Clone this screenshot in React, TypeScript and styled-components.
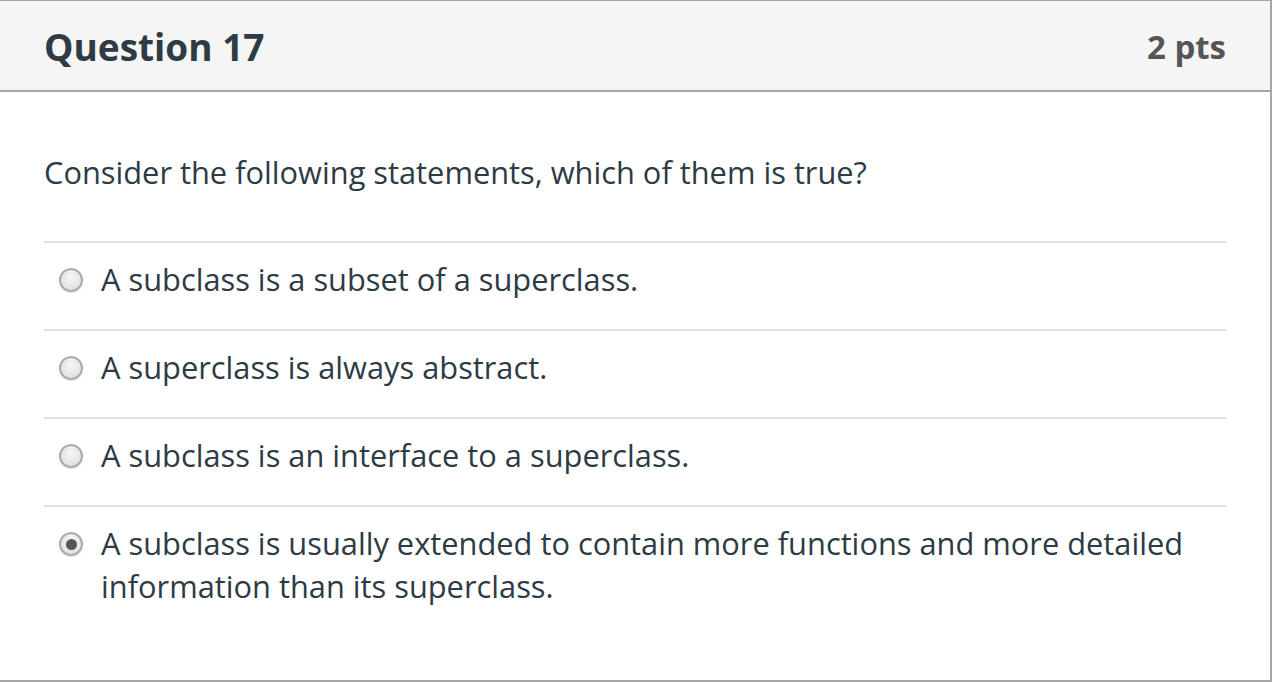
import React from "react";
import styled, { createGlobalStyle } from "styled-components";

const Global = createGlobalStyle`
  html, body { margin: 0; padding: 0; background: #fff; }
  body { font-family: "Open Sans", "Liberation Sans", sans-serif; color: #2d3b45; }
`;

const Panel = styled.div`
  box-sizing: border-box;
  width: 1274px;
  height: 683px;
  margin: -1px 0 0 -2px;
  border: 2px solid #a6a6a6;
  display: flex;
  flex-direction: column;
`;

const Header = styled.div`
  box-sizing: border-box;
  height: 91px;
  background: #f5f5f5;
  border-bottom: 2px solid #a6a6a6;
  display: flex;
  align-items: center;
  justify-content: space-between;
  padding: 1px 44px 0 44px;
`;

const Title = styled.h2`
  margin: 0;
  font-size: 37px;
  font-weight: 700;
  color: #2d3b45;
`;

const Points = styled.div`
  font-size: 33px;
  font-weight: 700;
  color: #555;
`;

const Body = styled.div`
  padding: 58px 44px 0 44px;
`;

const Prompt = styled.p`
  margin: 0 0 47px 0;
  font-size: 30.8px;
  line-height: 44px;
  color: #2d3b45;
`;

const Answers = styled.div`
  display: flex;
  flex-direction: column;
`;

const Answer = styled.label`
  display: flex;
  align-items: flex-start;
  gap: 18px;
  border-top: 2px solid #e0e0e0;
  padding: 15px 0 0 15px;
  min-height: 71px;
  font-size: 30.8px;
  line-height: 43px;
  color: #2d3b45;
`;

const Radio = styled.span<{ $checked?: boolean }>`
  flex: none;
  box-sizing: border-box;
  width: 24px;
  height: 24px;
  margin-top: 10px;
  border-radius: 50%;
  border: 2px solid #ababab;
  background: radial-gradient(circle at 50% 35%, #f6f6f6, #dcdcdc);
  box-shadow: 0 1px 1px rgba(0,0,0,0.12);
  display: flex;
  align-items: center;
  justify-content: center;
  &::after {
    content: "";
    display: ${(p) => (p.$checked ? "block" : "none")};
    width: 11px;
    height: 11px;
    border-radius: 50%;
    background: #555;
  }
`;

const answers = [
  { text: "A subclass is a subset of a superclass.", checked: false },
  { text: "A superclass is always abstract.", checked: false },
  { text: "A subclass is an interface to a superclass.", checked: false },
  {
    text: "A subclass is usually extended to contain more functions and more detailed information than its superclass.",
    checked: true,
  },
];

export default function App() {
  return (
    <>
      <Global />
      <Panel>
        <Header>
          <Title>Question 17</Title>
          <Points>2 pts</Points>
        </Header>
        <Body>
          <Prompt>Consider the following statements, which of them is true?</Prompt>
          <Answers>
            {answers.map((a) => (
              <Answer key={a.text}>
                <Radio $checked={a.checked} />
                <span>{a.text}</span>
              </Answer>
            ))}
          </Answers>
        </Body>
      </Panel>
    </>
  );
}
